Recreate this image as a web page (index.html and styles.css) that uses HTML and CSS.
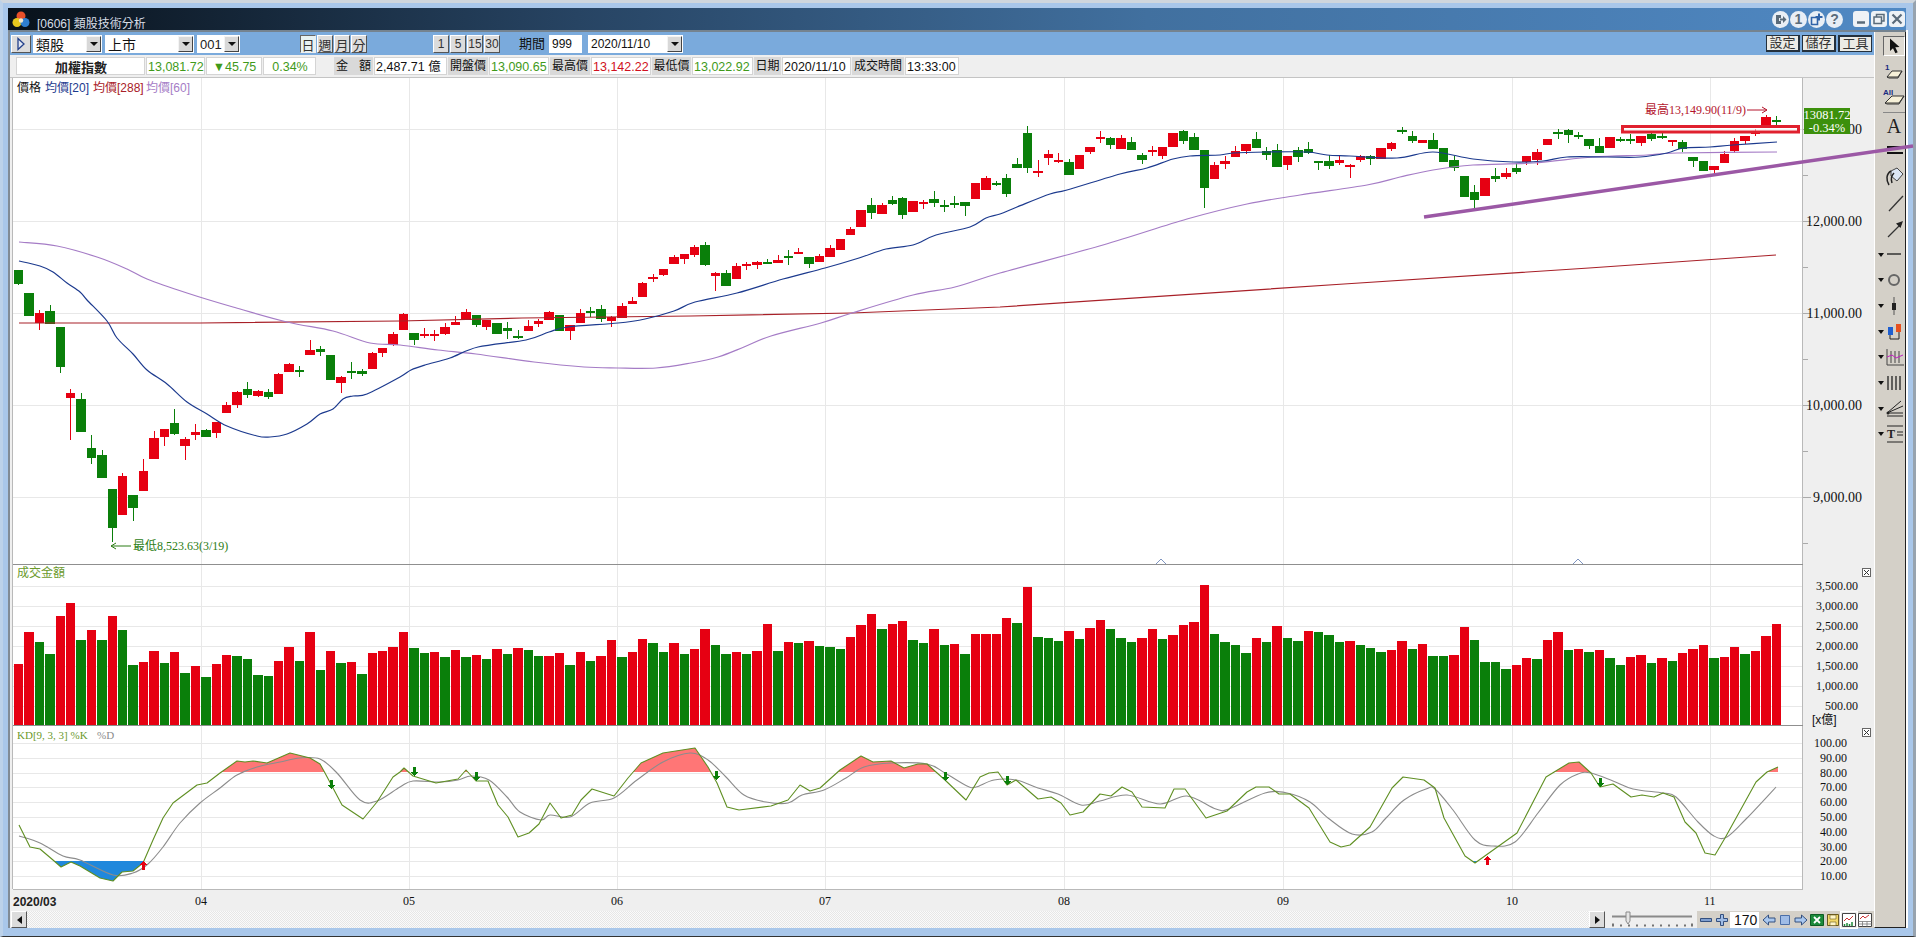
FILE: index.html
```html
<!DOCTYPE html>
<html>
<head>
    <title>[0606] 類股技術分析</title>
    <link rel="stylesheet" href="styles.css">
</head>
<body>
    <div class="window">
        <div class="titlebar">
            <svg class="logo" width="18" height="17" viewBox="0 0 18 17">
                <circle cx="9" cy="5" r="4.5" fill="#e8502a"/>
                <circle cx="5" cy="11.5" r="4.5" fill="#e6c81e"/>
                <circle cx="13" cy="11.5" r="4.5" fill="#2f7fd0"/>
                <circle cx="9" cy="9.5" r="2.2" fill="#f4ead0"/>
            </svg>
            <span class="title-text">[0606] 類股技術分析</span>
            <div class="round-btns">
                <svg class="round-btn" viewBox="0 0 17 17"><path d="M4 4h5v3h-2v3h2v3H4z" fill="#5a6b7a"/><path d="M8 7.500h3V5l3.500 3.500L11 12V9.500H8z" fill="#5a6b7a"/></svg>
                <span class="round-btn round-text">1</span>
                <svg class="round-btn" viewBox="0 0 17 17"><path d="M3.500 6.500h6v7h-6z" fill="none" stroke="#2f63a8" stroke-width="1.600"/><path d="M11 2.500v7M7.500 6h7" stroke="#2f63a8" stroke-width="2"/></svg>
                <span class="round-btn round-text">?</span>
            </div>
            <div class="win-btns">
                <svg class="win-btn" viewBox="0 0 16 16"><path d="M4 11.500h8" stroke="#5a6b7a" stroke-width="2.400"/></svg>
                <svg class="win-btn" viewBox="0 0 16 16"><path d="M3 6h7.500v6.500H3zM5.500 6V3.500H13V10h-2.500" fill="none" stroke="#5a6b7a" stroke-width="1.500"/></svg>
                <svg class="win-btn" viewBox="0 0 16 16"><path d="M3.500 3.500l9 9M12.500 3.500l-9 9" stroke="#5a6b7a" stroke-width="2.200"/></svg>
            </div>
        </div>

        <div class="client">
            <div class="content">
                <div class="toolbar">
                    <button class="btn play"><svg width="10" height="14" viewBox="0 0 10 14"><path d="M2 1.500l6 5.500-6 5.500z" fill="#dfe6f2" stroke="#23408a" stroke-width="1.300"/></svg></button>
                    <div class="select select-kind"><span>類股</span><i class="arrow"></i></div>
                    <div class="select select-market"><span>上市</span><i class="arrow"></i></div>
                    <div class="select select-code"><span>001</span><i class="arrow"></i></div>
                    <div class="seg seg-period">
                        <button class="btn btn-on">日</button><button class="btn">週</button><button class="btn">月</button><button class="btn">分</button>
                    </div>
                    <div class="seg seg-minute">
                        <button class="btn">1</button><button class="btn">5</button><button class="btn">15</button><button class="btn">30</button>
                    </div>
                    <span class="range-label">期間</span>
                    <div class="range-input">999</div>
                    <div class="select select-date"><span>2020/11/10</span><i class="arrow"></i></div>
                    <div class="action-btns">
                        <button class="action">設定</button>
                        <button class="action">儲存</button>
                        <button class="action action-on">工具</button>
                    </div>
                </div>

                <div class="info">
                    <div class="cell cell-name">加權指數</div>
                    <div class="cell up">13,081.72</div>
                    <div class="cell up center">▼45.75</div>
                    <div class="cell up center">0.34%</div>
                    <span></span>
                    <div class="cell-label wide"><span>金</span><span>額</span></div>
                    <div class="cell">2,487.71 億</div>
                    <div class="cell-label">開盤價</div>
                    <div class="cell up">13,090.65</div>
                    <div class="cell-label">最高價</div>
                    <div class="cell down">13,142.22</div>
                    <div class="cell-label">最低價</div>
                    <div class="cell up">13,022.92</div>
                    <div class="cell-label">日期</div>
                    <div class="cell">2020/11/10</div>
                    <div class="cell-label">成交時間</div>
                    <div class="cell">13:33:00</div>
                </div>

                <svg id="chart" class="chart" width="1862" height="833" viewBox="12 78 1862 833"></svg>

                <div class="status">
                    <div class="scroll">
                        <button class="btn scroll-btn"><i class="tri-left"></i></button>
                        <div class="scroll-track"></div>
                        <button class="btn scroll-btn"><i class="tri-right"></i></button>
                    </div>
                    <svg class="slider" width="92" height="17" viewBox="0 0 92 17">
                        <path d="M7 5.500h80" stroke="#8a8a8a" stroke-width="2"/>
                        <path d="M8 12.500v3M16 13.500v2M24 13.500v2M32 13.500v2M40 13.500v2M48 13.500v2M56 13.500v2M64 13.500v2M72 13.500v2M80 13.500v2M87 12.500v3" stroke="#222" stroke-width="1.200"/>
                        <path d="M21 1h4v9l-2 3-2-3z" fill="#e6e6e6" stroke="#8a8a8a"/>
                    </svg>
                    <div class="status-tools">
                        <svg class="st-icon" viewBox="0 0 16 16"><path d="M2.500 6.500h11v3h-11z" fill="#7f9fd0" stroke="#34507f"/></svg>
                        <svg class="st-icon" viewBox="0 0 16 16"><path d="M6.500 2.500h3v4h4v3h-4v4h-3v-4h-4v-3h4z" fill="#9fbce6" stroke="#34507f"/></svg>
                        <div class="zoom-input">170</div>
                        <svg class="st-icon gap" viewBox="0 0 16 16"><path d="M7.500 3L2 8l5.500 5v-3h6.500V6H7.500z" fill="#a9c8f0" stroke="#34507f"/></svg>
                        <svg class="st-icon" viewBox="0 0 16 16"><path d="M3.500 3.500h9v9h-9z" fill="#9fbce6" stroke="#4a6ea8"/></svg>
                        <svg class="st-icon" viewBox="0 0 16 16"><path d="M8.500 3L14 8l-5.500 5v-3H2V6h6.500z" fill="#a9c8f0" stroke="#34507f"/></svg>
                        <svg class="st-icon" viewBox="0 0 16 16"><path d="M1.500 2.500h13v11h-13z" fill="#1c8a3a" stroke="#0c5c22"/><path d="M5 5l6 6M11 5l-6 6" stroke="#fff" stroke-width="1.800"/></svg>
                        <svg class="st-icon" viewBox="0 0 16 16"><path d="M2.500 2.500h11v11h-11z" fill="#f2d86a" stroke="#6a5a20"/><path d="M5 3h6v4H5zM5 10h6v3.500H5z" fill="#fff6c8" stroke="#6a5a20" stroke-width=".6"/></svg>
                        <svg class="st-icon st-on" viewBox="0 0 16 16"><path d="M1.500 1.500h13v13h-13z" fill="#fff" stroke="#444"/><path d="M3 9l3-3 2 2 4-4" fill="none" stroke="#c33" stroke-width="1"/><path d="M3.500 14v-2M6 14v-3M8.500 14v-2M11 14v-4" stroke="#1c8a3a" stroke-width="1.500"/></svg>
                        <svg class="st-icon" viewBox="0 0 16 16"><path d="M1.500 1.500h13v13h-13z" fill="#fff" stroke="#444"/><path d="M3 7l3-3 2 2 4-3" fill="none" stroke="#c33" stroke-width="1"/><path d="M1.500 9.500h13M1.500 12h13M5.500 9.500v5M10 9.500v5" stroke="#777" stroke-width=".8"/></svg>
                    </div>
                </div>
            </div>

            <div class="sidebar">
                <div class="tool"><span class="tool-on"><svg width="18" height="18" viewBox="0 0 18 18"><path d="M5 1.500v12.500l3-2.800 2.400 5 2.300-1-2.400-5 4.200-.3z" fill="#111"/></svg></span></div>
                <div class="tool"><svg class="icon" viewBox="0 0 22 20"><text x="2" y="8" class="icon-num">1</text><path d="M4 15l5-6h10l-4 7H6z" fill="#f6f0d8" stroke="#333"/><path d="M4 15h11l4-6" fill="none" stroke="#333"/></svg></div>
                <div class="tool"><svg class="icon" viewBox="0 0 22 20"><text x="0" y="8" class="icon-num">All</text><path d="M2 16l7-7h12l-5 8H4z" fill="#f6f0d8" stroke="#333"/><path d="M2 16h14l5-7" fill="none" stroke="#333"/></svg></div>
                <div class="tool-sep"></div>
                <div class="tool"><span class="icon-a">A</span></div>
                <div class="tool"><svg class="icon" viewBox="0 0 22 20"><path d="M4 5h16M4 11h16" stroke="#111" stroke-width="2"/></svg></div>
                <div class="tool"><svg class="icon" viewBox="0 0 22 20"><path d="M8 4l6-3 6 6-6 7-6-5z" fill="#dce6f4" stroke="#444"/><path d="M8 4C3 7 3 13 6 18M11 6c-3 3-3 7-2 10" fill="none" stroke="#222" stroke-width="1.500"/></svg></div>
                <div class="tool"><svg class="icon" viewBox="0 0 22 20"><path d="M6 18L20 3" stroke="#333" stroke-width="1.300"/></svg></div>
                <div class="tool"><svg class="icon" viewBox="0 0 22 20"><path d="M5 18L18 5" stroke="#333" stroke-width="1.300"/><path d="M20 2l-7 2.500 4.500 4.500z" fill="#222"/></svg></div>
                <div class="tool"><i class="caret"></i><svg class="icon" viewBox="0 0 22 20"><path d="M4 10h14" stroke="#333" stroke-width="1.500"/></svg></div>
                <div class="tool"><i class="caret"></i><svg class="icon" viewBox="0 0 22 20"><circle cx="11" cy="10" r="5" fill="none" stroke="#666" stroke-width="2"/></svg></div>
                <div class="tool"><i class="caret"></i><svg class="icon" viewBox="0 0 22 20"><path d="M11 1v18" stroke="#555"/><path d="M9 7h4v7H9z" fill="#222"/></svg></div>
                <div class="tool"><i class="caret"></i><svg class="icon" viewBox="0 0 22 20"><path d="M5 6h5v8H5z" fill="#1f5fd0"/><path d="M13 3h5v8h-5z" fill="#e8501e"/><path d="M7 14v4h9v-7" fill="none" stroke="#222"/></svg></div>
                <div class="tool"><i class="caret"></i><svg class="icon" viewBox="0 0 22 20"><path d="M4 2v16h17M8 4v12M12 4v12M16 4v12" fill="none" stroke="#444"/><path d="M4 10l5-2 4 3 7-3" fill="none" stroke="#c020c0"/></svg></div>
                <div class="tool"><i class="caret"></i><svg class="icon" viewBox="0 0 22 20"><path d="M5 3v14M9 3v14M13 3v14M17 3v14" stroke="#222" stroke-width="1.300"/></svg></div>
                <div class="tool"><i class="caret"></i><svg class="icon" viewBox="0 0 22 20"><path d="M4 15L18 3M4 15L20 8M4 15h16M4 18h16" stroke="#222"/><circle cx="5" cy="15" r="1.500" fill="#222"/></svg></div>
                <div class="tool"><i class="caret"></i><svg class="icon" viewBox="0 0 22 20"><path d="M4 2h16M4 18h16M14 8h6M14 11h6" stroke="#222"/><text x="4" y="14" class="icon-t">T</text></svg></div>
            </div>
        </div>
    </div>

    <svg class="annotations" width="1916" height="937" viewBox="0 0 1916 937">
        <path d="M1424 217L1913 146" stroke="#9b58a5" stroke-width="3.500"/>
        <rect x="1622.500" y="126.500" width="176" height="5.500" fill="#fff" fill-opacity=".55" stroke="#e0202e" stroke-width="3"/>
    </svg>

    <script src="chart.js"></script>
</body>
</html>
```

FILE: styles.css
```css
* {
    margin: 0;
    padding: 0;
    box-sizing: border-box;
}

body {
    font-family: 'Liberation Sans', 'Noto Sans CJK TC', sans-serif;
    width: 1916px;
    height: 937px;
    overflow: hidden;
    color: #111;
}

.window {
    height: 937px;
    background: #a9c7ea;
    border-top: 3px solid #cfd6dd;
    border-left: 3px solid #bcd2ea;
    border-right: 3px solid #97a3af;
    border-bottom: 1px solid #333;
    padding: 5px 7px 8px 5px;
}

/* title bar */
.titlebar {
    height: 22px;
    display: flex;
    align-items: center;
    background: linear-gradient(90deg, #08111a 0%, #274463 30%, #41709f 60%, #5089c4 100%);
    padding-left: 4px;
}

.logo {
    flex: none;
}

.title-text {
    margin-left: 7px;
    margin-top: 6px;
    font-size: 12px;
    color: #d8dee6;
}

.round-btns {
    margin-left: auto;
    display: flex;
    gap: 1px;
}

.round-btn {
    width: 17px;
    height: 17px;
    border-radius: 50%;
    background: #e8eef5;
    display: block;
}

.round-text {
    text-align: center;
    font-size: 14px;
    line-height: 17px;
    font-weight: bold;
    color: #5a6b7a;
}

.win-btns {
    margin-left: 10px;
    margin-right: 1px;
    display: flex;
    gap: 2px;
}

.win-btn {
    width: 16px;
    height: 16px;
    background: #eef2f6;
    border-radius: 3px;
    display: block;
}

.client {
    height: 898px;
    display: flex;
    border-top: 2px solid #75838f;
    border-left: 2px solid #808b96;
    background: #efefef;
    box-shadow: 2px 0 0 #fff;
}

.content {
    width: 1864px;
    flex: none;
}

/* toolbar */
.toolbar {
    height: 23px;
    display: flex;
    align-items: flex-start;
    padding: 3px 2px 0 1px;
    background: #7aaadc;
}

.btn {
    display: flex;
    align-items: center;
    justify-content: center;
    height: 18px;
    background: #dcdcdc;
    border: 1px solid;
    border-color: #fff #555 #555 #fff;
    font-family: inherit;
    font-size: 13px;
    color: #333;
}

.btn-on {
    background: #e8f2f2;
    border-color: #666 #eee #eee #666;
}

.play {
    width: 20px;
}

.select {
    display: flex;
    align-items: center;
    justify-content: space-between;
    height: 18px;
    background: #fff;
    font-size: 14px;
    padding: 0 1px 0 3px;
}

.select-kind {
    width: 69px;
    margin-left: 2px;
}

.select-market {
    width: 89px;
    margin-left: 3px;
}

.select-code {
    width: 43px;
    margin-left: 3px;
    font-size: 13px;
    color: #222;
}

.select-date {
    width: 95px;
    margin-left: 6px;
    font-size: 12px;
}

.arrow {
    width: 15px;
    height: 16px;
    display: block;
    position: relative;
    background: #d8d8d8;
    border: 1px solid;
    border-color: #f4f4f4 #444 #444 #f4f4f4;
}

.arrow::after {
    content: "";
    position: absolute;
    left: 3px;
    top: 5px;
    border: 4px solid transparent;
    border-top: 4px solid #111;
    border-bottom: 0;
}

.seg {
    display: flex;
    gap: 1px;
}

.seg-period {
    margin-left: 60px;
}

.seg-period .btn {
    width: 16px;
}

.seg-minute {
    margin-left: 66px;
}

.seg-minute .btn {
    width: 16px;
    font-size: 12px;
}

.range-label {
    margin-left: 19px;
    font-size: 13px;
    line-height: 18px;
}

.range-input {
    width: 33px;
    height: 18px;
    margin-left: 4px;
    background: #fff;
    font-size: 12px;
    line-height: 18px;
    padding-left: 3px;
}

.action-btns {
    margin-left: auto;
    display: flex;
    gap: 2px;
}

.action {
    width: 34px;
    height: 17px;
    font-family: inherit;
    font-size: 13px;
    line-height: 14px;
    color: #333;
    background: #ebebe6;
    border: 1px solid #24303c;
    border-right-width: 2px;
    border-bottom-width: 2px;
}

.action-on {
    border-width: 2px 1px 1px 2px;
}

/* quote row */
.info {
    height: 23px;
    padding: 2px 0 0 6px;
    display: grid;
    grid-template-columns: 129px 59px 56px 53px 16px 39px 73px 40px 60px 40px 60px 39px 61px 27px 69px 52px 54px;
    grid-template-rows: 18px;
    column-gap: 1px;
    font-size: 12.5px;
    line-height: 19px;
    border-bottom: 1px solid #c4c4c4;
}

.cell {
    background: #fff;
    border: 1px solid #d4d4d4;
    padding-left: 1px;
    white-space: nowrap;
    overflow: hidden;
}

.cell-name {
    font-weight: bold;
    text-align: center;
    font-size: 13px;
    color: #222;
}

.cell-label {
    background: #d9d9d9;
    text-align: center;
    font-size: 12px;
}

.cell-label.wide {
    display: flex;
    justify-content: space-between;
    padding: 0 2px;
}

.up {
    color: #3f9a1a;
}

.down {
    color: #d01020;
}

.center {
    text-align: center;
}

/* chart */
.chart {
    display: block;
    margin-left: 2px;
}

.chart text {
    font-family: 'Liberation Serif', 'Noto Sans CJK TC', serif;
}

.chart text.sans {
    font-family: 'Liberation Sans', 'Noto Sans CJK TC', sans-serif;
}

.plot-bg {
    fill: #fff;
}

.frame {
    stroke: #b9b9b9;
    stroke-width: 1;
    shape-rendering: crispEdges;
}

.pane-line {
    stroke: #8f8f8f;
    stroke-width: 1;
    shape-rendering: crispEdges;
}

.grid {
    stroke: #e8e8e8;
    stroke-width: 1;
    shape-rendering: crispEdges;
}

.tick {
    stroke: #aaa;
    stroke-width: 1;
    shape-rendering: crispEdges;
}

.rise {
    fill: #e60012;
    shape-rendering: crispEdges;
}

.fall {
    fill: #0a7f0a;
    shape-rendering: crispEdges;
}

.line {
    fill: none;
    stroke-width: 1.2;
    stroke-linejoin: round;
}

.ma20 {
    stroke: #1c3a8e;
}

.ma60 {
    stroke: #a57cc6;
}

.ma288 {
    stroke: #a82028;
}

.kd-k {
    stroke: #5f8f22;
    stroke-width: 1.1;
}

.kd-d {
    stroke: #8c8c8c;
    stroke-width: 1.1;
}

.kd-hot {
    fill: #ff7676;
}

.kd-cold {
    fill: #2088dc;
}

.axis-label {
    font-size: 14px;
    fill: #111;
    text-anchor: end;
}

.axis-small {
    font-size: 12px;
    fill: #111;
    text-anchor: end;
}

.axis-unit {
    font-size: 12px;
    fill: #111;
}

.legend {
    font-size: 12px;
}

.legend-kd {
    font-size: 11px;
}

.month {
    font-size: 12px;
    fill: #111;
}

.month-first {
    font-size: 12px;
    font-weight: bold;
    fill: #222;
}

.tag {
    fill: #3c900c;
}

.tag-text {
    font-size: 12.5px;
    fill: #fff;
    text-anchor: middle;
}

.note-high {
    fill: #b4142c;
    font-size: 12px;
}

.note-low {
    fill: #2b7d14;
    font-size: 12px;
}

.pane-close {
    fill: #fff;
    stroke: #666;
    stroke-width: 1;
    shape-rendering: crispEdges;
}

/* scrollbar and bottom tools */
.status {
    height: 17px;
    display: flex;
}

.scroll {
    width: 1594px;
    margin-left: 1px;
    display: flex;
}

.scroll-btn {
    width: 16px;
    height: 17px;
    flex: none;
}

.scroll-track {
    flex: 1;
    background: repeating-conic-gradient(#fafafa 0 25%, #e6e6e6 0 50%) 0 0 / 2px 2px;
}

.tri-left {
    border: 4px solid transparent;
    border-right: 5px solid #111;
    border-left: 0;
}

.tri-right {
    border: 4px solid transparent;
    border-left: 5px solid #111;
    border-right: 0;
}

.slider {
    flex: none;
}

.status-tools {
    display: flex;
    align-items: center;
    width: 177px;
    background: #d4d0c8;
    padding-left: 1px;
}

.st-icon {
    width: 16px;
    height: 16px;
    flex: none;
}

.st-icon.gap {
    margin-left: 2px;
}

.st-on {
    background: #eee;
    outline: 1px solid #fff;
}

.zoom-input {
    width: 29px;
    height: 16px;
    background: #fff;
    font-size: 14px;
    line-height: 17px;
    padding-left: 4px;
    flex: none;
}

/* right drawing tools */
.sidebar {
    width: 32px;
    flex: none;
    background: #d4d0c8;
    border-left: 1px solid #fff;
    border-right: 1px solid #222;
    border-bottom: 1px solid #222;
    padding: 1px 0 0 1px;
}

.tool {
    height: 25.7px;
    display: flex;
    align-items: center;
    justify-content: flex-end;
    position: relative;
}

.tool-on {
    width: 22px;
    height: 20px;
    display: flex;
    align-items: center;
    justify-content: center;
    border: 1px solid;
    border-color: #666 #fff #fff #666;
    background: #dedad2;
}

.tool-sep {
    height: 3px;
    margin-left: 7px;
    border-bottom: 1px solid #888;
}

.icon {
    width: 22px;
    height: 20px;
    display: block;
}

.icon-a {
    width: 22px;
    text-align: center;
    font-family: 'Liberation Serif', serif;
    font-size: 20px;
    line-height: 20px;
    color: #222;
}

.icon-num {
    font-family: 'Liberation Sans', sans-serif;
    font-size: 8px;
    font-weight: bold;
    fill: #1a2a80;
}

.icon-t {
    font-family: 'Liberation Serif', serif;
    font-size: 12px;
    font-weight: bold;
    fill: #222;
}

.caret {
    position: absolute;
    left: 2px;
    top: 11px;
    border: 3px solid transparent;
    border-top: 4px solid #111;
    border-bottom: 0;
}

.annotations {
    position: absolute;
    left: 0;
    top: 0;
    pointer-events: none;
}
```

FILE: chart.js
```js
// Drawn in page pixels, the chart's viewBox starts at the plot's page position
const NS = 'http://www.w3.org/2000/svg';
const chart = document.getElementById('chart');

const STEP = 10.4;
const PLOT_LEFT = 13;
const PLOT_RIGHT = 1803;
const PRICE_TOP = 78;
const PRICE_BOTTOM = 565;
const VOL_BOTTOM = 726;
const KD_BOTTOM = 889;

function add(tag, attrs, text) {
    const node = document.createElementNS(NS, tag);
    for (const key in attrs) node.setAttribute(key, attrs[key]);
    if (text !== undefined) node.textContent = text;
    chart.appendChild(node);
    return node;
}

function hLine(y, x1, x2, cls) {
    add('line', { x1: x1, x2: x2, y1: y + 0.5, y2: y + 0.5, class: cls });
}

function vLine(x, y1, y2, cls) {
    add('line', { x1: x + 0.5, x2: x + 0.5, y1: y1, y2: y2, class: cls });
}

function toPoints(list) {
    return list.map(p => p.join(',')).join(' ');
}

// catmull-rom through the points, the averages are smooth curves
function smoothPath(list) {
    let d = `M${list[0][0]} ${list[0][1]}`;
    for (let i = 0; i < list.length - 1; i++) {
        const p0 = list[Math.max(i - 1, 0)];
        const p1 = list[i];
        const p2 = list[i + 1];
        const p3 = list[Math.min(i + 2, list.length - 1)];
        const c1x = p1[0] + (p2[0] - p0[0]) / 6;
        const c1y = p1[1] + (p2[1] - p0[1]) / 6;
        const c2x = p2[0] - (p3[0] - p1[0]) / 6;
        const c2y = p2[1] - (p3[1] - p1[1]) / 6;
        d += `C${c1x.toFixed(1)} ${c1y.toFixed(1)} ${c2x.toFixed(1)} ${c2y.toFixed(1)} ${p2[0]} ${p2[1]}`;
    }
    return d;
}

// [rise, body top, body bottom, high, low] in pixel rows
const candles = [
    [0,270,284,270,285],[0,293,316,293,316],[1,313,323,310,330],[0,311,324,305,324],[0,327,367,327,373],
    [1,393,398,389,440],[0,399,432,393,432],[0,448,458,435,464],[0,455,478,450,478],[0,489,528,489,542],
    [1,476,515,473,515],[0,495,508,495,521],[1,471,491,459,491],[1,438,459,431,459],[1,429,437,429,446],
    [0,423,434,409,435],[1,439,446,437,460],[1,432,435,424,440],[0,430,437,429,437],[1,422,433,422,438],
    [1,405,413,402,413],[1,392,405,391,408],[0,389,395,382,398],[1,391,396,390,397],[0,392,397,389,399],
    [1,374,394,373,394],[1,364,372,363,372],[0,370,372,366,377],[1,350,355,340,355],[0,349,352,346,356],
    [0,355,380,355,380],[1,377,383,376,393],[0,371,372,362,379],[0,371,374,369,376],[1,353,369,352,369],
    [1,348,353,348,357],[1,334,345,332,346],[1,314,330,313,330],[0,333,340,333,345],[1,334,336,328,338],
    [1,334,335,330,341],[1,327,334,323,335],[1,322,325,316,325],[1,312,320,309,320],[0,315,325,315,327],
    [1,320,327,320,330],[0,323,334,323,334],[0,328,331,322,339],[0,336,338,330,339],[1,326,331,320,331],
    [1,321,324,319,327],[1,312,320,311,320],[0,315,331,315,331],[1,325,331,325,340],[1,313,323,309,323],
    [0,311,313,307,317],[0,309,319,305,322],[1,317,321,316,327],[1,306,318,303,318],[1,301,304,297,304],
    [1,283,297,282,297],[1,277,279,274,282],[1,269,275,269,276],[1,257,264,255,264],[1,254,259,254,264],
    [1,247,255,245,257],[0,245,265,242,266],[1,273,276,272,291],[0,273,286,270,286],[1,266,279,263,279],
    [1,264,266,262,270],[1,262,265,261,269],[0,262,263,259,264],[1,260,263,255,263],[0,256,257,250,265],
    [1,252,254,248,254],[0,257,264,257,268],[1,256,262,254,262],[1,248,257,245,257],[1,239,250,239,250],
    [1,229,235,227,235],[1,210,227,210,227],[0,205,213,198,219],[1,205,214,203,214],[0,200,204,196,205],
    [0,198,215,197,219],[1,201,212,201,212],[1,202,203,200,209],[0,199,203,191,207],[0,205,207,200,212],
    [0,203,205,196,208],[0,202,206,202,216],[1,183,199,183,199],[1,178,190,176,190],[0,183,184,181,186],
    [0,178,194,174,197],[0,164,168,158,168],[0,133,168,126,173],[1,171,173,160,177],[1,154,158,150,165],
    [1,160,162,153,163],[0,162,175,159,175],[1,155,169,155,169],[1,147,152,147,154],[1,137,139,131,143],
    [0,138,145,137,149],[1,138,149,135,149],[0,142,150,137,150],[0,155,160,153,164],[1,150,152,146,156],
    [1,147,156,147,159],[1,133,147,133,147],[0,131,141,130,144],[0,137,150,133,150],[0,150,188,150,208],
    [1,165,179,162,179],[1,161,164,156,169],[1,151,157,146,157],[1,144,151,144,154],[0,139,148,132,148],
    [0,151,155,147,160],[0,150,167,144,167],[1,156,165,156,170],[0,150,157,147,162],[0,149,153,142,154],
    [0,161,163,161,170],[0,161,166,155,169],[1,160,163,156,165],[1,165,167,164,178],[1,156,160,155,162],
    [0,156,159,155,165],[1,148,159,148,159],[1,143,149,142,151],[0,130,132,127,134],[0,136,141,131,143],
    [1,140,143,140,143],[0,140,149,133,149],[0,148,162,148,162],[0,160,168,156,171],[0,176,197,176,197],
    [0,192,200,185,208],[1,178,196,178,196],[0,176,179,168,182],[1,173,177,168,179],[0,168,172,163,174],
    [1,156,162,156,165],[1,152,160,149,165],[1,139,145,139,145],[0,132,134,129,139],[0,130,135,129,143],
    [0,135,137,132,139],[0,139,146,139,149],[0,146,153,138,153],[1,137,148,137,148],[0,139,141,137,142],
    [0,139,141,134,144],[1,136,143,136,146],[0,134,139,132,141],[0,136,138,132,139],[1,140,142,140,146],
    [0,142,149,140,152],[0,157,161,157,167],[0,161,171,161,171],[1,166,170,166,176],[1,154,163,151,163],
    [1,141,151,138,153],[1,136,141,136,144],[1,131,134,129,136],[1,117,125,115,125],[0,120,122,116,125]
];

// bar heights, positive for red and negative for green
const volume = [
    61,93,-83,-71,109,122,-85,95,-85,109,-95,-60,63,74,-62,73,-52,59,-48,61,
    70,-69,-66,-50,-49,64,78,-64,93,-55,74,-62,63,-51,72,74,78,93,-77,-72,
    73,-68,75,-68,70,-66,76,-71,77,-75,-69,69,72,-60,73,-64,69,85,-68,73,
    86,-82,-73,82,-71,76,96,-80,-71,73,-71,74,101,-74,83,-82,84,-79,-78,-76,
    88,100,111,-96,101,104,-85,-82,96,-80,81,-71,91,91,91,107,-102,138,-88,-87,
    -84,94,-86,97,105,-96,-87,-83,87,96,-86,90,100,103,140,-91,-83,-80,-72,87,
    -83,99,-87,-84,94,-93,-90,-83,84,-80,-77,-73,75,84,-76,81,-69,-69,70,98,
    -85,-63,-63,-56,60,67,-66,85,93,-75,76,-73,75,-67,-60,68,70,-62,67,-64,
    72,76,80,-67,68,78,-71,74,89,101
];

const ma20 = [[19,261],[40,266],[53,272],[67,283],[80,292],[87,300],[107,321],[117,338],[133,354],[147,370],[167,384],[187,402],[207,414],[227,426],[257,436],[270,437],[287,434],[307,424],[320,414],[333,409],[343,399],[353,396],[367,394],[400,377],[411,370],[425,365],[450,358],[478,347],[526,340],[549,332],[568,327],[618,323],[645,319],[674,311],[695,302],[737,293],[783,279],[825,268],[859,258],[886,249],[913,245],[936,235],[970,227],[986,218],[1000,214],[1017,207],[1050,194],[1067,190],[1120,174],[1147,168],[1173,159],[1190,156],[1220,155],[1233,153],[1267,152],[1307,152],[1327,155],[1350,156],[1397,158],[1433,152],[1473,159],[1513,162],[1543,161],[1567,157],[1607,157],[1640,157],[1667,153],[1683,148],[1710,147],[1733,145],[1777,142]];
const ma60 = [[19,242],[57,246],[97,257],[127,269],[147,279],[187,293],[233,307],[287,322],[333,331],[370,343],[400,345],[438,350],[476,354],[534,362],[584,367],[618,368],[656,368],[691,363],[718,357],[744,347],[771,336],[821,323],[852,313],[913,295],[955,287],[1000,273],[1103,245],[1187,219],[1247,204],[1300,195],[1367,185],[1400,177],[1433,170],[1473,165],[1533,163],[1593,157],[1647,155],[1677,153],[1777,152]];
const ma288 = [[19,323],[200,323],[400,321],[522,318],[691,316],[852,313],[1000,307],[1344,284],[1589,268],[1776,255]];

const kdK = [[19,825],[30,847],[40,849],[53,860],[61,867],[71,862],[80,866],[100,878],[113,881],[122,872],[133,871],[143,863],[153,840],[163,818],[173,803],[197,785],[207,783],[220,773],[237,761],[245,762],[253,761],[267,763],[290,753],[310,758],[320,764],[325,773],[333,788],[342,805],[363,819],[377,802],[393,777],[400,772],[404,768],[413,776],[436,783],[458,779],[466,770],[476,781],[488,781],[498,805],[508,817],[518,837],[529,833],[539,824],[550,803],[561,818],[572,815],[581,800],[592,789],[614,796],[628,778],[641,763],[663,753],[695,748],[708,767],[717,783],[727,807],[739,810],[771,806],[788,800],[800,785],[810,791],[820,788],[840,770],[861,756],[873,762],[891,761],[904,768],[918,764],[927,764],[945,780],[966,800],[980,777],[989,773],[998,772],[1007,785],[1016,780],[1038,799],[1051,797],[1061,803],[1070,815],[1083,812],[1100,794],[1111,796],[1122,787],[1132,792],[1142,807],[1165,808],[1174,789],[1185,789],[1206,818],[1227,811],[1247,792],[1256,787],[1269,787],[1279,794],[1290,794],[1309,808],[1330,842],[1341,847],[1350,845],[1370,827],[1392,788],[1403,777],[1424,780],[1435,788],[1444,818],[1465,856],[1475,863],[1517,833],[1546,777],[1569,763],[1579,762],[1591,773],[1600,787],[1613,784],[1631,797],[1642,795],[1654,797],[1663,793],[1674,797],[1685,822],[1696,833],[1705,853],[1715,855],[1725,838],[1756,782],[1767,772],[1778,767]];
const kdD = [[19,836],[40,843],[63,856],[80,860],[113,875],[133,873],[148,864],[163,847],[180,823],[200,803],[220,788],[237,775],[257,767],[280,762],[300,758],[320,759],[337,773],[360,800],[377,801],[400,787],[413,781],[440,782],[458,780],[471,776],[489,780],[507,797],[520,812],[541,820],[550,815],[570,817],[590,803],[614,798],[637,780],[663,762],[690,753],[708,760],[726,777],[744,795],[766,802],[788,803],[802,795],[824,790],[846,778],[864,767],[891,763],[927,764],[945,773],[967,786],[976,787],[994,780],[1016,780],[1038,788],[1058,794],[1081,805],[1100,801],[1127,795],[1160,804],[1187,796],[1216,809],[1229,809],[1265,793],[1287,793],[1310,802],[1328,818],[1352,834],[1372,832],[1386,818],[1404,800],[1426,789],[1435,789],[1453,810],[1475,840],[1493,846],[1515,842],[1538,813],[1560,785],[1578,774],[1591,773],[1613,781],[1633,789],[1663,793],[1676,797],[1698,822],[1714,836],[1727,837],[1747,818],[1776,787]];

const months = [['04',201],['05',409],['06',617],['07',825],['08',1064],['09',1283],['10',1512],['11',1710]];

function barLeft(i) {
    return Math.round(14 + STEP * i);
}

function barWidth(i) {
    return barLeft(i + 1) - barLeft(i) - 1;
}

function drawBackdrop() {
    add('rect', { x: PLOT_LEFT, y: PRICE_TOP, width: PLOT_RIGHT - PLOT_LEFT, height: KD_BOTTOM - PRICE_TOP, class: 'plot-bg' });

    [129, 221, 313, 405, 497].forEach(y => hLine(y, PLOT_LEFT, PLOT_RIGHT, 'grid'));
    [586, 606, 626, 646, 666, 686, 706].forEach(y => hLine(y, PLOT_LEFT, PLOT_RIGHT, 'grid'));
    for (let i = 0; i < 10; i++) hLine(Math.round(743 + i * 14.8), PLOT_LEFT, PLOT_RIGHT, 'grid');
    months.forEach(m => vLine(m[1], PRICE_TOP, KD_BOTTOM, 'grid'));

    // frame and pane dividers
    hLine(PRICE_TOP - 1, PLOT_LEFT, PLOT_RIGHT, 'frame');
    vLine(12, PRICE_TOP, KD_BOTTOM, 'frame');
    vLine(PLOT_RIGHT - 1, PRICE_TOP, KD_BOTTOM, 'frame');
    hLine(PRICE_BOTTOM - 1, PLOT_LEFT, PLOT_RIGHT, 'pane-line');
    hLine(VOL_BOTTOM - 1, PLOT_LEFT, PLOT_RIGHT, 'pane-line');
    hLine(KD_BOTTOM, PLOT_LEFT, PLOT_RIGHT, 'frame');
}

function drawAxes() {
    // only the tail of the 13,000.00 label shows past the price tag
    [[129, '00'], [221, '12,000.00'], [313, '11,000.00'], [405, '10,000.00'], [497, '9,000.00']].forEach(a => {
        hLine(a[0], PLOT_RIGHT, PLOT_RIGHT + 8, 'tick');
        hLine(a[0] + 46, PLOT_RIGHT, PLOT_RIGHT + 5, 'tick');
        add('text', { x: 1862, y: a[0] + 5, class: 'axis-label' }, a[1]);
    });

    ['3,500.00', '3,000.00', '2,500.00', '2,000.00', '1,500.00', '1,000.00', '500.00'].forEach((label, i) => {
        add('text', { x: 1858, y: 590 + i * 20, class: 'axis-small' }, label);
    });
    add('text', { x: 1812, y: 724, class: 'axis-unit sans' }, '[x億]');

    for (let i = 0; i < 10; i++) {
        add('text', { x: 1847, y: 747 + i * 14.8, class: 'axis-small' }, (100 - i * 10).toFixed(2));
    }

    add('text', { x: 13, y: 906, class: 'month-first sans' }, '2020/03');
    months.forEach(m => add('text', { x: m[1] - 6, y: 905, class: 'month' }, m[0]));

    // pane close boxes
    [568, 728].forEach(y => {
        add('rect', { x: 1862.5, y: y + 0.5, width: 8, height: 8, class: 'pane-close' });
        add('path', { d: `M1864 ${y + 2}l5 5m0-5l-5 5`, stroke: '#333', fill: 'none' });
    });
}

function drawLegends() {
    const legend = [[17, '價格', '#111'], [45, '均價[20]', '#1c3a8e'], [93, '均價[288]', '#a82028'], [146, '均價[60]', '#a57cc6']];
    legend.forEach(l => add('text', { x: l[0], y: 92, class: 'legend sans', fill: l[2] }, l[1]));
    add('text', { x: 17, y: 577, class: 'legend sans', fill: '#6c9a2c' }, '成交金額');
    add('text', { x: 17, y: 739, class: 'legend-kd', fill: '#6c9a2c' }, 'KD[9, 3, 3] %K');
    add('text', { x: 97, y: 739, class: 'legend-kd', fill: '#8c8c8c' }, '%D');
}

function drawCandles() {
    candles.forEach((c, i) => {
        const cls = c[0] ? 'rise' : 'fall';
        const left = barLeft(i);
        const width = barWidth(i);
        const mid = left + Math.floor(width / 2);
        add('rect', { x: mid, y: c[3], width: 1, height: c[4] - c[3], class: cls });
        add('rect', { x: left, y: c[1], width: width, height: Math.max(c[2] - c[1], 2), class: cls });
    });

    add('polyline', { points: toPoints(ma288), class: 'line ma288' });
    add('path', { d: smoothPath(ma60), class: 'line ma60' });
    add('path', { d: smoothPath(ma20), class: 'line ma20' });
}

function drawVolume() {
    volume.forEach((v, i) => {
        const h = Math.abs(v);
        add('rect', { x: barLeft(i), y: VOL_BOTTOM - 1 - h, width: barWidth(i), height: h, class: v > 0 ? 'rise' : 'fall' });
    });
}

function arrowMark(x, y, up) {
    const dir = up ? -1 : 1;
    const d = `M${x} ${y + 5 * dir}l-4 ${-4 * dir}h2.500v${-5 * dir}h3v${5 * dir}h2.500z`;
    add('path', { d: d, class: up ? 'rise' : 'fall' });
}

function drawKD() {
    const defs = add('defs', {});
    const clip = (id, y, height) => {
        const cp = document.createElementNS(NS, 'clipPath');
        cp.setAttribute('id', id);
        const r = document.createElementNS(NS, 'rect');
        r.setAttribute('x', 0);
        r.setAttribute('y', y);
        r.setAttribute('width', 1916);
        r.setAttribute('height', height);
        cp.appendChild(r);
        defs.appendChild(cp);
    };
    clip('kd-over', 726, 46);
    clip('kd-under', 861, 28);

    // overbought above the 80 line, oversold below the 20 line
    const first = kdK[0][0];
    const last = kdK[kdK.length - 1][0];
    add('polygon', { points: toPoints(kdK.concat([[last, 772], [first, 772]])), class: 'kd-hot', 'clip-path': 'url(#kd-over)' });
    add('polygon', { points: toPoints(kdK.concat([[last, 861], [first, 861]])), class: 'kd-cold', 'clip-path': 'url(#kd-under)' });

    add('path', { d: smoothPath(kdD), class: 'line kd-d' });
    add('polyline', { points: toPoints(kdK), class: 'line kd-k' });

    arrowMark(143, 866, true);
    arrowMark(1487, 861, true);
    [[331, 784], [414, 771], [476, 776], [716, 775], [945, 776], [1007, 780], [1600, 782]].forEach(p => arrowMark(p[0], p[1], false));
}

function drawNotes() {
    // latest price tag sits on top of the 13,000 label
    add('rect', { x: 1804, y: 108, width: 46, height: 26, class: 'tag' });
    add('text', { x: 1827, y: 119, class: 'tag-text' }, '13081.72');
    add('text', { x: 1827, y: 132, class: 'tag-text' }, '-0.34%');

    add('text', { x: 1645, y: 114, class: 'note-high' }, '最高13,149.90(11/9)');
    add('path', { d: 'M1747 110h20m-5-3l5 3-5 3', stroke: '#b4142c', fill: 'none' });

    add('text', { x: 133, y: 550, class: 'note-low' }, '最低8,523.63(3/19)');
    add('path', { d: 'M131 546h-20m5-3l-5 3 5 3', stroke: '#2b7d14', fill: 'none' });

    // drawing markers on the price pane floor
    [1161, 1578].forEach(x => add('path', { d: `M${x - 5} 564l5-5 5 5`, stroke: '#7f95c0', fill: 'none' }));
}

drawBackdrop();
drawAxes();
drawLegends();
drawCandles();
drawVolume();
drawKD();
drawNotes();
```
